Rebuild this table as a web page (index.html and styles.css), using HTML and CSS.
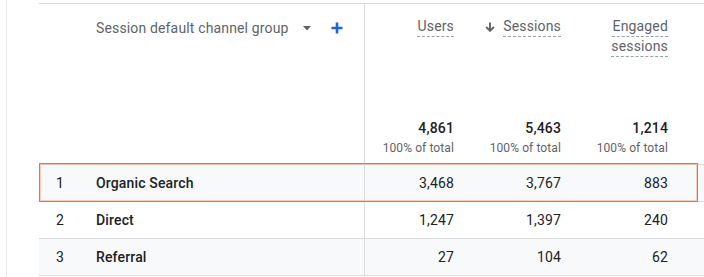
FILE: index.html
```html
<!DOCTYPE html>
<html lang="en">
<head>
<meta charset="utf-8">
<title>Channel group report</title>
<link rel="stylesheet" href="styles.css">
</head>
<body>
<div class="page">
  <div class="panel">
    <div class="table">
      <div class="row head">
        <div class="dim-head">
          <span class="dim-title">Session default channel group</span>
          <svg class="caret" width="8" height="5" viewBox="0 0 8 5"><path d="M0 0h8L4 4.5z" fill="#5f6368"/></svg>
          <svg class="plus" width="12" height="12" viewBox="0 0 12 12"><path d="M6 0.5v11M0.5 6h11" stroke="#1967d2" stroke-width="2.6"/></svg>
        </div>
        <div class="metric-head">
          <div class="mh-title"><span class="ul">Users</span></div>
          <div class="totals"><div class="total">4,861</div><div class="pct">100% of total</div></div>
        </div>
        <div class="metric-head">
          <div class="mh-title">
            <svg class="sort" width="10" height="10" viewBox="0 0 10 10"><path d="M5 0.5v8M1.2 5l3.8 3.8L8.8 5" stroke="#5f6368" stroke-width="1.9" fill="none"/></svg>
            <span class="ul">Sessions</span>
          </div>
          <div class="totals"><div class="total">5,463</div><div class="pct">100% of total</div></div>
        </div>
        <div class="metric-head">
          <div class="mh-title"><span class="ul">Engaged<br>sessions</span></div>
          <div class="totals"><div class="total">1,214</div><div class="pct">100% of total</div></div>
        </div>
      </div>
      <div class="row data alt">
        <div class="dim"><span class="idx">1</span><span class="name">Organic Search</span></div>
        <div class="num">3,468</div>
        <div class="num">3,767</div>
        <div class="num">883</div>
      </div>
      <div class="row data">
        <div class="dim"><span class="idx">2</span><span class="name">Direct</span></div>
        <div class="num">1,247</div>
        <div class="num">1,397</div>
        <div class="num">240</div>
      </div>
      <div class="row data alt">
        <div class="dim"><span class="idx">3</span><span class="name">Referral</span></div>
        <div class="num">27</div>
        <div class="num">104</div>
        <div class="num">62</div>
      </div>
      <div class="highlight"></div>
    </div>
  </div>
</div>
</body>
</html>
```

FILE: styles.css
```css
* { box-sizing: border-box; }

html, body {
  margin: 0;
  padding: 0;
  background: #ffffff;
}

body {
  font-family: Roboto, "Liberation Sans", sans-serif;
  font-size: 14px;
  line-height: 20px;
  letter-spacing: 0.15px;
  color: #202124;
  width: 704px;
  height: 277px;
  overflow: hidden;
}

.page {
  padding-left: 6px;
}

.panel {
  border-left: 1px solid #e8eaed;
  padding-left: 32px;
  padding-top: 3px;
  height: 277px;
}

.table {
  position: relative;
  border-top: 1px solid #dadce0;
}

.row {
  display: flex;
  border-bottom: 1px solid #dadce0;
}

.head {
  height: 161px;
}

.dim-head {
  width: 326px;
  border-right: 1px solid #dadce0;
  padding: 14px 0 0 57px;
  display: flex;
  align-items: flex-start;
  color: #5f6368;
}

.dim-title {
  line-height: 20px;
}

.caret {
  margin: 8px 0 0 14px;
}

.plus {
  margin: 4px 0 0 20px;
}

.metric-head {
  width: 107px;
  padding: 12px 18px 8px 0;
  display: flex;
  flex-direction: column;
  justify-content: space-between;
  align-items: flex-end;
}

.mh-title {
  display: flex;
  align-items: flex-start;
  justify-content: flex-end;
  color: #5f6368;
  text-align: right;
}

.ul {
  text-decoration: underline dashed #9aa0a6;
  text-decoration-thickness: 1px;
  text-underline-offset: 5px;
}

.sort {
  margin: 6px 8px 0 0;
}

.totals {
  text-align: right;
}

.total {
  font-weight: 500;
  line-height: 20px;
}

.pct {
  font-size: 12px;
  line-height: 16px;
  letter-spacing: 0.1px;
  color: #5f6368;
  margin-top: 2px;
}

.data {
  height: 37px;
  align-items: center;
}

.alt {
  background: #f8f9fa;
}

.dim {
  width: 326px;
  height: 100%;
  border-right: 1px solid #dadce0;
  display: flex;
  align-items: center;
}

.idx {
  width: 57px;
  padding-left: 17px;
}

.name {
  font-weight: 500;
}

.num {
  width: 107px;
  padding-right: 18px;
  text-align: right;
}

.highlight {
  position: absolute;
  left: 0;
  top: 159px;
  width: 659px;
  height: 39px;
  border-width: 1px;
  border-style: solid;
  border-color: rgb(240, 112, 62);
  box-shadow: inset 0 0 0 1px rgba(246, 160, 120, 0.5);
  pointer-events: none;
}
```
